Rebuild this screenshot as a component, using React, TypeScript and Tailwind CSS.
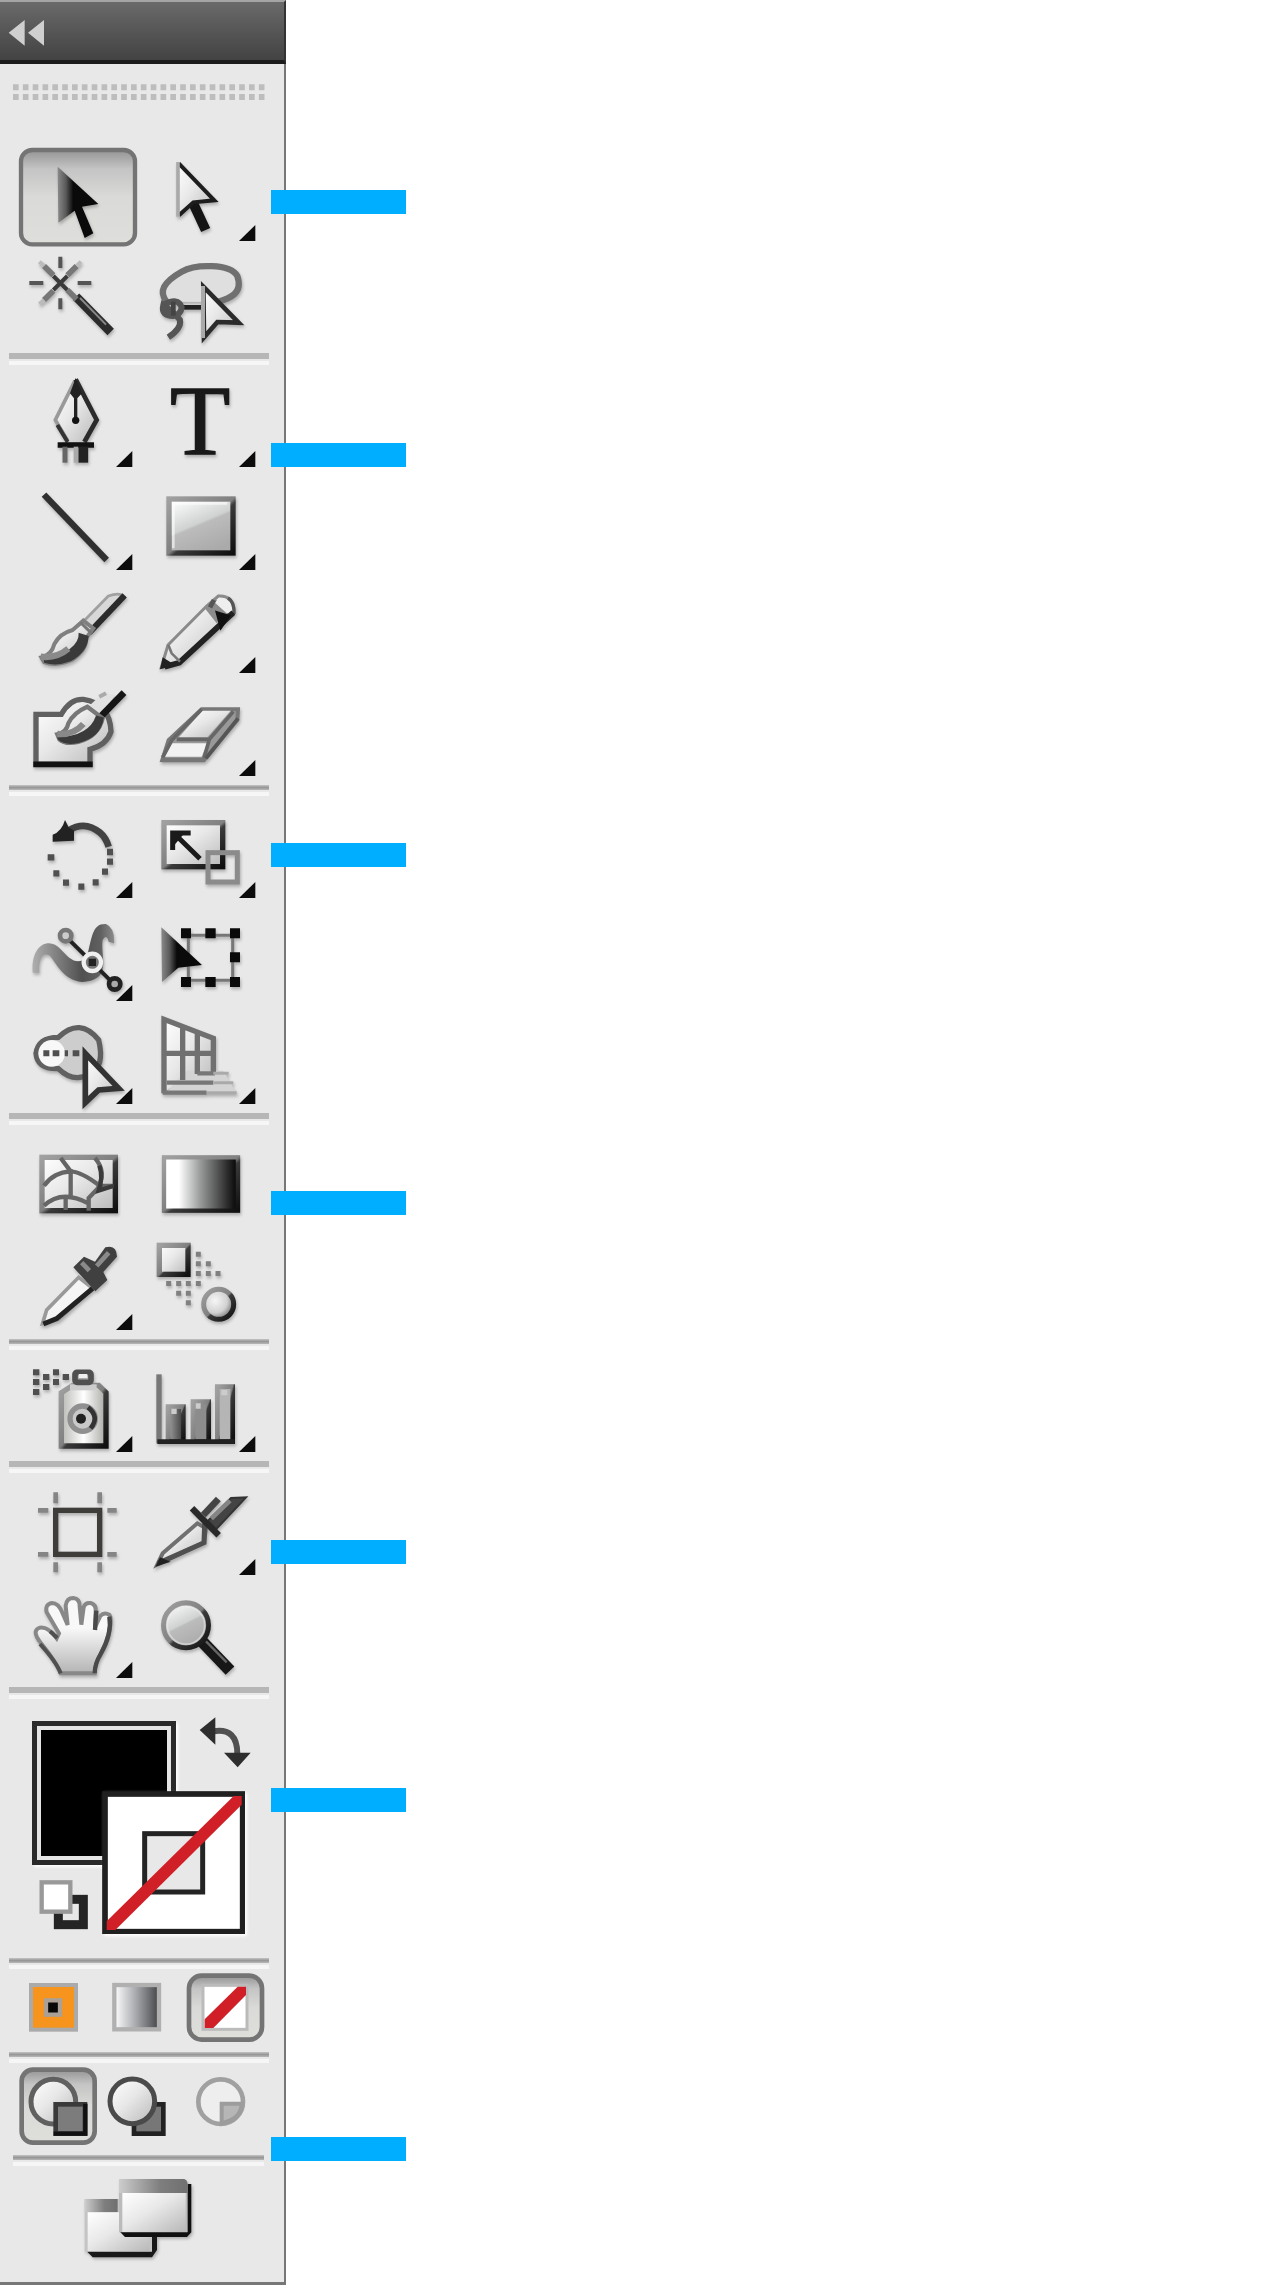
import type { ReactNode } from "react";

const DARK = "#2b2b2b";

function Gradients() {
  return (
    <svg className="absolute size-0" aria-hidden="true">
      <defs>
        <linearGradient id="pressed" x1="0" y1="0" x2="0" y2="1">
          <stop offset="0" stopColor="#949494" />
          <stop offset="0.2" stopColor="#c4c4c4" />
          <stop offset="0.5" stopColor="#dadad8" />
          <stop offset="1" stopColor="#dededb" />
        </linearGradient>
        <linearGradient id="arrow" x1="0" y1="0" x2="1" y2="0">
          <stop offset="0" stopColor="#8a8a8a" />
          <stop offset="0.2" stopColor="#5a5a5a" />
          <stop offset="0.38" stopColor="#0a0a0a" />
        </linearGradient>
        <linearGradient id="light" x1="0" y1="0" x2="1" y2="1">
          <stop offset="0" stopColor="#ffffff" />
          <stop offset="0.45" stopColor="#e8e8e8" />
          <stop offset="1" stopColor="#b8b8b8" />
        </linearGradient>
        <linearGradient id="glass" x1="0.1" y1="0" x2="0.6" y2="1">
          <stop offset="0" stopColor="#ffffff" />
          <stop offset="0.5" stopColor="#d0d2d2" />
          <stop offset="0.54" stopColor="#bcbcbc" />
          <stop offset="1" stopColor="#aaaaaa" />
        </linearGradient>
        <linearGradient id="edge" x1="0" y1="0" x2="1" y2="1">
          <stop offset="0" stopColor="#a0a0a0" />
          <stop offset="0.5" stopColor="#808080" />
          <stop offset="0.55" stopColor="#3a3a3a" />
          <stop offset="1" stopColor="#101010" />
        </linearGradient>
        <linearGradient id="ramp" x1="0" y1="0" x2="1" y2="0">
          <stop offset="0.2" stopColor="#ffffff" />
          <stop offset="0.5" stopColor="#969897" />
          <stop offset="0.95" stopColor="#101010" />
        </linearGradient>
        <linearGradient id="rampSoft" x1="0" y1="0" x2="1" y2="0">
          <stop offset="0" stopColor="#ffffff" />
          <stop offset="0.5" stopColor="#a4a6aa" />
          <stop offset="1" stopColor="#444448" />
        </linearGradient>
        <linearGradient id="titleBar" x1="0" y1="0" x2="1" y2="0">
          <stop offset="0" stopColor="#cdcdcd" />
          <stop offset="0.6" stopColor="#7e7e7e" />
          <stop offset="1" stopColor="#707070" />
        </linearGradient>
        <linearGradient id="metal" x1="0" y1="0" x2="1" y2="0">
          <stop offset="0" stopColor="#b8b8b4" />
          <stop offset="0.5" stopColor="#ffffff" />
          <stop offset="1" stopColor="#a8a8a4" />
        </linearGradient>
        <linearGradient id="barFill" x1="0" y1="0" x2="1" y2="0">
          <stop offset="0" stopColor="#a0a0a0" />
          <stop offset="1" stopColor="#3c3c3c" />
        </linearGradient>
        <linearGradient id="tube" gradientUnits="userSpaceOnUse" x1="95" y1="440" x2="370" y2="440">
          <stop offset="0" stopColor="#b0b0b0" />
          <stop offset="0.55" stopColor="#505050" />
          <stop offset="0.75" stopColor="#606060" />
          <stop offset="1" stopColor="#a8a8a8" />
        </linearGradient>
        <radialGradient id="ball" cx="0.38" cy="0.38" r="0.62">
          <stop offset="0" stopColor="#f6f6f6" />
          <stop offset="0.65" stopColor="#d2d2d2" />
          <stop offset="1" stopColor="#808080" />
        </radialGradient>
        <linearGradient id="skin" x1="0" y1="0" x2="0" y2="1">
          <stop offset="0.4" stopColor="#f8f8f8" />
          <stop offset="1" stopColor="#b4b4b4" />
        </linearGradient>
      </defs>
    </svg>
  );
}

/* Artwork is drawn on a grid of three units per pixel. */
function Tool({ label, x, y, more, pressed, children }: {
  label: string; x: number; y: number; more?: boolean; pressed?: boolean; children: ReactNode;
}) {
  return (
    <button type="button" aria-label={label} aria-pressed={!!pressed} className="block h-[103px]">
      <svg viewBox={`${x} ${y} 369 309`} className="size-full overflow-visible" fill="none">
        {pressed && (
          <rect x={x + 12} y={y + 12} width="342" height="283" rx="34" fill="url(#pressed)" stroke="#747474" strokeWidth="13" />
        )}
        <g className="drop-shadow-[3px_7px_5px_rgba(0,0,0,0.25)]">{children}</g>
        {more && <path d={`M${x + 297} ${y + 285}h49v-48z`} fill="#0c0c0c" />}
      </svg>
    </button>
  );
}

function Rule({ kind = "thin" }: { kind?: "thick" | "thin" | "short" | "inset" }) {
  const box = {
    thick: "h-5 ml-[9px] mr-[15px]",
    thin: "h-[19px] ml-[9px] mr-[15px]",
    short: "h-4 ml-[9px] mr-[15px]",
    inset: "h-4 ml-[13px] mr-5",
  }[kind];
  return (
    <div role="separator" className={`pt-px ${box}`}>
      <div className={kind === "thick" ? "h-1.5 bg-[#b6b6b6]" : "h-[5px] bg-linear-to-b from-[#c4c4c4] via-[#979797] to-[#b8b8b8]"} />
      <div className="mt-0.5 h-1 bg-[#f6f6f6]" />
    </div>
  );
}

function Group({ children, marker }: { children: ReactNode; marker?: ReactNode }) {
  return (
    <section className="relative">
      <div className="ml-[17px] grid w-[246px] grid-cols-2">{children}</div>
      {marker}
    </section>
  );
}

function Marker({ at }: { at: string }) {
  return <div className={`absolute left-[271px] h-6 w-[135px] bg-[#00aeff] ${at}`} />;
}

export default function App() {
  return (
    <main className="min-h-screen bg-white font-['Liberation_Sans',sans-serif]">
      <Gradients />
      <aside aria-label="Tools" className="w-[286px] border-r-2 border-b-[3px] border-[#777] bg-[#e8e8e8]">
        <header className="-mr-0.5 h-16 border-t-2 border-r-2 border-b-4 border-t-[#a5a5a5] border-r-[#333] border-b-[#1c1c1c] bg-linear-to-b from-[#6a6a6a] to-[#434343]">
          <button type="button" aria-label="Collapse panel" className="ml-2 block h-full w-10">
            <svg viewBox="24 6 120 174" className="size-full" fill="#cfcfcf">
              <path d="M26 98L74 60V137ZM84 98L132 60V137Z" />
            </svg>
          </button>
        </header>

        <div className="h-[82px] pt-[18px] pl-[13px]">
          <svg viewBox="39 246 762 60" className="h-5 w-[254px]" stroke="#bdbdbd" strokeWidth="18" strokeDasharray="17 12.5">
            <path d="M39 262H797M39 291H797" />
          </svg>
        </div>

        <Group marker={<Marker at="top-11" />}>
          <Tool label="Selection" x={51} y={438} pressed>
            <path d="M173 500L295 612L246 620L280 700L254 714L224 632L175 668Z" fill="url(#arrow)" />
          </Tool>
          <Tool label="Direct selection" x={420} y={438} more>
            <path d="M575 600L617 690" stroke="#151515" strokeWidth="30" />
            <path d="M534 490L642 600L580 605L534 648Z" fill="url(#light)" />
            <path d="M536 490L643 601L580 607L537 646" stroke="#1d1d1d" strokeWidth="12" />
            <path d="M534 650V486" stroke="#aaa" strokeWidth="11" />
          </Tool>
          <Tool label="Magic wand" x={51} y={747}>
            <path d="M228 890L332 996" stroke={DARK} strokeWidth="27" />
            <path d="M240 894L318 974" stroke="#888" strokeWidth="6" />
            <path d="M160 828L202 870M160 870L202 828" stroke="#3a3a3a" strokeWidth="12" />
            <path d="M181 770V804M181 895V928M88 849H130M233 849H274" stroke="#555" strokeWidth="12" />
            <path d="M132 798L160 826M230 798L202 826M132 900L160 872M202 870L230 898" stroke="#777" strokeWidth="17" />
            <path d="M118 785L132 798M243 785L230 798M118 912L132 900" stroke="#bbb" strokeWidth="12" />
          </Tool>
          <Tool label="Lasso" x={420} y={747}>
            <path d="M500 905C475 875 490 846 545 815C585 792 690 790 712 828C730 880 690 895 652 906" fill="#dfdfdf" stroke="#707070" strokeWidth="19" />
            <path d="M540 922H604" stroke="#222" strokeWidth="14" />
            <path d="M490 915Q535 890 545 922Q543 944 520 948Q482 948 490 915Q525 940 540 960Q545 985 505 1012" stroke="#555" strokeWidth="18" />
            <path d="M520 905V947" stroke="#444" strokeWidth="14" />
            <path d="M610 860L716 968L652 966L612 1012Z" fill="url(#light)" stroke={DARK} strokeWidth="14" />
            <path d="M609 858V1014" stroke="#aaa" strokeWidth="12" />
          </Tool>
        </Group>
        <Rule kind="thick" />

        <Group marker={<Marker at="top-[71px]" />}>
          <Tool label="Pen" x={51} y={66} more>
            <path d="M227 90L168 210L205 276H250L292 210Z" fill="url(#light)" />
            <path d="M225 92L166 210L203 272" stroke="#999" strokeWidth="11" />
            <path d="M172 225L203 276" stroke="#333" strokeWidth="12" />
            <path d="M227 88L290 210L253 276" stroke={DARK} strokeWidth="14" />
            <path d="M227 84L246 130L232 145V205H222V145L210 130Z" fill="#222" />
            <circle cx="227" cy="211" r="11" fill="#111" />
            <path d="M173 285H282" stroke="#111" strokeWidth="17" />
            <path d="M195 290V338" stroke="#666" strokeWidth="15" />
            <path d="M228 290V338" stroke="#aaa" strokeWidth="14" />
            <path d="M250 290V338" stroke="#222" strokeWidth="29" />
          </Tool>
          <Tool label="Type" x={420} y={66} more>
            <text x="510" y="311" fontSize="296" fill="#191919" stroke="#191919" strokeWidth="4" className="font-['Liberation_Serif',serif]">T</text>
          </Tool>
          <Tool label="Line segment" x={51} y={375} more>
            <path d="M132 434L320 630" stroke="#303030" strokeWidth="19" />
          </Tool>
          <Tool label="Rectangle" x={420} y={375} more>
            <rect x="507" y="447" width="192" height="162" fill="url(#glass)" stroke="url(#edge)" strokeWidth="16" />
            <path d="M520 595V460H682" stroke="#fff" strokeOpacity="0.6" strokeWidth="8" />
          </Tool>
          <Tool label="Paintbrush" x={51} y={24}>
            <path d="M240 165L325 78Q360 66 372 80L280 178Z" fill="#d8d8d8" stroke="#a0a0a0" strokeWidth="8" />
            <path d="M374 76L268 188" stroke={DARK} strokeWidth="18" />
            <path d="M124 262Q155 255 163 222Q180 190 218 180L250 152L280 175L258 205Q260 240 215 270Q170 290 132 276Z" fill="url(#light)" stroke="#808080" strokeWidth="12" />
            <path d="M132 266Q185 262 210 236Q238 215 236 188L266 198Q264 246 212 274Q170 290 132 278Z" fill="#3a3a3a" />
            <path d="M122 260Q170 266 205 236" stroke="#8a8a8a" strokeWidth="19" />
            <path d="M242 158L275 190" stroke="#777" strokeWidth="9" />
          </Tool>
          <Tool label="Pencil" x={420} y={24} more>
            <path d="M484 292L504 225L620 108L655 78Q700 75 702 125L540 278Z" fill="url(#light)" stroke="#8a8a8a" strokeWidth="9" />
            <path d="M612 112L650 160L688 132L648 88Z" fill="#8c8c8c" />
            <path d="M656 84Q694 82 698 124L680 130L645 98Z" fill="#eee" />
            <path d="M684 84Q704 96 702 132" stroke="#555" strokeWidth="10" />
            <path d="M700 128L538 278L494 290" stroke="#222" strokeWidth="17" />
            <path d="M682 140L655 132L664 166Z" fill="#111" stroke="#111" strokeWidth="14" />
            <path d="M630 112L642 90" stroke="#555" strokeWidth="14" />
            <path d="M505 225L515 250L540 275" stroke="#777" strokeWidth="8" />
            <path d="M480 298L488 262L526 286Z" fill="#222" />
          </Tool>
          <Tool label="Blob brush" x={51} y={333}>
            <path d="M108 433H184Q210 386 250 388Q330 400 333 485Q320 525 270 538V583H108Z" fill="url(#light)" stroke="#606060" strokeWidth="16" />
            <path d="M100 583H278" stroke="#111" strokeWidth="17" />
            <path d="M215 455L304 374L345 374L304 440Z" fill="#e2e2e2" />
            <path d="M372 368L296 446" stroke="#161616" strokeWidth="20" />
            <path d="M298 380L318 370" stroke="#aaa" strokeWidth="12" />
            <path d="M172 493Q200 487 205 460Q220 428 262 410L308 445Q295 500 235 516Q195 524 178 508Z" fill="url(#light)" stroke="#777" strokeWidth="13" />
            <path d="M176 505Q270 500 290 440L308 445Q300 500 235 516Q195 524 178 508Z" fill="#3a3a3a" stroke="#3a3a3a" strokeWidth="6" />
            <path d="M172 492Q220 496 250 462" stroke="#888" strokeWidth="19" />
          </Tool>
          <Tool label="Eraser" x={420} y={333} more>
            <path d="M605 418H714L712 450L612 570H487L506 510Z" fill="#999" stroke="#777" strokeWidth="12" />
            <path d="M607 422H692L622 502H537Z" fill="url(#light)" />
            <path d="M516 520H622L605 560H492Z" fill="#f2f2f2" />
            <path d="M605 418L516 510L488 562" stroke="#666" strokeWidth="11" />
            <path d="M700 425L628 508L612 565M530 508H628" stroke="#666" strokeWidth="11" />
            <path d="M484 570H614" stroke="#777" strokeWidth="14" />
            <path d="M714 445L618 565" stroke="#555" strokeWidth="11" />
          </Tool>
        </Group>
        <Rule />

        <Group marker={<Marker at="top-10" />}>
          <Tool label="Rotate" x={51} y={39} more>
            <path d="M205 122Q255 90 300 128Q317 142 326 170" stroke="#424242" strokeWidth="20" />
            <path d="M195 90L206 112L222 122V152L158 155V134Q185 125 195 90Z" fill="#222" />
            <path d="M321 186H339M321 215H339M306 245H324M278 277H296M235 290H253M189 278H207M160 250H178M143 202H163" stroke="#505050" strokeWidth="19" />
          </Tool>
          <Tool label="Scale" x={420} y={39} more>
            <rect x="492" y="98" width="176" height="132" fill="url(#light)" stroke="url(#edge)" strokeWidth="16" />
            <path d="M524 132L600 206M518 180V129H572" stroke="#1a1a1a" strokeWidth="15" />
            <path d="M513 177V125H557Z" fill="#1a1a1a" />
            <rect x="624" y="188" width="88" height="88" stroke="#8b8b8b" strokeWidth="15" />
          </Tool>
          <Tool label="Warp" x={51} y={348} more>
            <path d="M98 548C92 460 150 440 182 478C210 508 228 526 260 505C277 440 276 400 318 402Q345 414 342 460L326 455Q320 430 308 450C300 500 340 570 246 576C188 570 170 520 148 496C122 484 116 520 118 548Z" fill="url(#tube)" />
            <path d="M200 442L340 580" stroke="#222" strokeWidth="12" />
            <circle cx="197" cy="437" r="17" fill="#ccc" stroke="#777" strokeWidth="14" />
            <circle cx="277" cy="517" r="26" fill="#777" stroke="#f0f0f0" strokeWidth="13" />
            <path d="M266 517H288" stroke="#222" strokeWidth="22" />
            <circle cx="344" cy="582" r="17" fill="#aaa" stroke="#222" strokeWidth="14" />
          </Tool>
          <Tool label="Free transform" x={420} y={348}>
            <path d="M560 436H698V571H565V436" stroke="#777" strokeWidth="9" />
            <path d="M484 412L606 525L535 533L486 576Z" fill="url(#arrow)" />
            <path d="M543 430H573M616 430H647M690 430H720M690 502H720M543 576H573M616 576H647M690 576H720" stroke="#0a0a0a" strokeWidth="30" />
          </Tool>
          <Tool label="Shape builder" x={51} y={657} more>
            <path d="M175 742Q240 680 296 750Q315 830 270 852Q220 880 175 836Q112 838 108 790Q115 742 175 742Z" fill="#cdcdcd" stroke="#606060" strokeWidth="16" />
            <circle cx="155" cy="790" r="40" fill="#f8f8f8" />
            <path d="M130 790H148M158 790H178M194 790H204M218 790H238" stroke="#505050" strokeWidth="18" />
            <path d="M256 790L356 895L296 900L256 938Z" fill="url(#light)" stroke="#333" strokeWidth="17" />
          </Tool>
          <Tool label="Perspective grid" x={420} y={657} more>
            <path d="M492 688L640 743V850H590L548 872L492 905Z" fill="url(#light)" />
            <path d="M500 905L560 842H670L710 910Z" fill="#d4d4d4" />
            <path d="M492 910V688L640 745V848M548 708V870M592 730V852M492 790H640" stroke="#707070" strokeWidth="16" />
            <path d="M592 850H645M500 878H640M488 908H620" stroke="#777" strokeWidth="13" />
            <path d="M640 850H686M640 878H700M620 908H710" stroke="#aaa" strokeWidth="9" />
          </Tool>
        </Group>
        <Rule kind="thick" />

        <Group marker={<Marker at="top-[59px]" />}>
          <Tool label="Mesh" x={51} y={66}>
            <rect x="126" y="142" width="220" height="160" fill="url(#light)" stroke="url(#edge)" strokeWidth="16" />
            <path d="M182 144L212 184Q246 186 300 228H340M132 227Q160 187 212 184V257M132 287Q185 237 265 280M285 144Q322 187 292 237L266 264V302M197 262V300" stroke="#666" strokeWidth="13" />
            <path d="M298 167Q310 202 296 242L340 228" stroke="#3a3a3a" strokeWidth="13" />
          </Tool>
          <Tool label="Gradient" x={420} y={66}>
            <rect x="492" y="142" width="222" height="160" fill="url(#ramp)" stroke="url(#edge)" strokeWidth="13" />
          </Tool>
          <Tool label="Eyedropper" x={51} y={375} more>
            <path d="M128 640L140 600L236 502L278 535L175 628Z" fill="#f5f5f5" stroke="#999" strokeWidth="11" />
            <path d="M278 535L170 626L130 642" stroke="#222" strokeWidth="15" />
            <path d="M220 472L252 440L285 455L316 412Q350 402 351 440L310 486L322 510L286 544Z" fill="#404040" />
            <path d="M245 458L268 482M290 468L326 428" stroke="#8a8a8a" strokeWidth="14" />
          </Tool>
          <Tool label="Blend" x={420} y={375}>
            <rect x="478" y="406" width="86" height="87" fill="url(#light)" stroke="url(#edge)" strokeWidth="16" />
            <path d="M595 425V500M625 454V500M654 483V500M506 513V528M536 513V558M565 513V590M595 513V528" stroke="#808080" strokeWidth="15" strokeDasharray="15 14" />
            <circle cx="656" cy="583" r="45" fill="url(#ball)" stroke="url(#edge)" strokeWidth="15" />
          </Tool>
        </Group>
        <Rule />

        <Group>
          <Tool label="Symbol sprayer" x={51} y={741} more>
            <path d="M99 787H118M99 816H118M99 846H118M129 801H148M129 831H148M159 787H177M159 816H177M188 801H207" stroke="#505050" strokeWidth="18" />
            <path d="M184 848L218 826H296L318 848V1008H184Z" fill="url(#metal)" stroke="url(#edge)" strokeWidth="16" />
            <path d="M210 832H290" stroke="#ccc" strokeWidth="18" />
            <rect x="225" y="787" width="48" height="30" rx="6" fill="#aaa" stroke="#505050" strokeWidth="17" />
            <path d="M236 798H262" stroke="#eee" strokeWidth="12" />
            <circle cx="248" cy="926" r="38" fill="#c9c9c9" stroke="#909090" strokeWidth="16" />
            <path d="M264 892Q300 920 272 955" stroke="#333" strokeWidth="14" />
            <circle cx="243" cy="926" r="15" fill="#222" />
          </Tool>
          <Tool label="Column graph" x={420} y={741} more>
            <path d="M504 890H550V995H504Z" fill="url(#barFill)" stroke="url(#edge)" strokeWidth="14" />
            <path d="M579 875H626V995H579Z" fill="#8c8c8c" stroke="url(#edge)" strokeWidth="14" />
            <path d="M652 830H698V995H652Z" fill="#b5b5b5" stroke="url(#edge)" strokeWidth="14" />
            <path d="M514 904H530M587 888H602M664 848H682" stroke="#ccc" strokeWidth="16" />
            <path d="M477 793V1000" stroke="#777" strokeWidth="16" />
            <path d="M472 995H704" stroke="#222" strokeWidth="14" />
          </Tool>
        </Group>
        <Rule kind="thick" />

        <Group marker={<Marker at="top-[60px]" />}>
          <Tool label="Artboard" x={51} y={60}>
            <rect x="167" y="151" width="132" height="132" stroke="#3e3d3a" strokeWidth="16" />
            <path d="M167 97V130M299 97V130M167 307V337M299 307V337M114 151H145M322 151H350M114 283H145M322 283H350" stroke="#858585" strokeWidth="14" />
          </Tool>
          <Tool label="Slice" x={420} y={60} more>
            <path d="M472 314L488 280L592 190L618 205L612 248Z" fill="url(#light)" stroke="#707070" strokeWidth="12" />
            <path d="M474 310L612 248L614 190" stroke="#505050" strokeWidth="15" />
            <path d="M466 320L480 292L512 305Z" fill="#222" />
            <path d="M610 165L655 117" stroke="#444" strokeWidth="20" />
            <path d="M624 182L693 114L738 112L648 208Z" fill="#444" stroke="#333" strokeWidth="6" />
            <path d="M634 176L690 122" stroke="#858585" strokeWidth="14" />
            <path d="M576 145L656 226" stroke="#292929" strokeWidth="19" />
          </Tool>
          <Tool label="Hand" x={51} y={369} more>
            <path d="M182 640Q170 607 122 548Q93 512 120 503Q145 500 170 535L177 520L140 457Q134 433 156 429Q175 429 187 458L203 495L197 437Q200 414 220 414Q240 416 239 440L244 494L251 442Q255 427 272 429Q289 434 287 454L285 502L301 468Q312 455 328 464Q334 472 331 497Q323 542 302 582Q284 612 284 640Z" fill="url(#skin)" stroke="#888" strokeWidth="12" />
            <path d="M328 470Q337 522 302 582Q284 612 284 640M289 452L285 510" stroke="#4a4a4a" strokeWidth="13" />
            <path d="M120 552Q170 607 182 640M150 514L172 534" stroke="#505050" strokeWidth="12" />
          </Tool>
          <Tool label="Zoom" x={420} y={369}>
            <path d="M606 544L690 632" stroke="#171717" strokeWidth="36" />
            <path d="M618 544L680 607" stroke="#666" strokeWidth="7" />
            <circle cx="558" cy="496" r="67" fill="url(#glass)" stroke="url(#edge)" strokeWidth="16" />
            <circle cx="558" cy="496" r="57" stroke="#eee" strokeOpacity="0.5" strokeWidth="7" />
          </Tool>
        </Group>
        <Rule kind="thick" />

        {/* Fill and stroke swatches overlap each other */}
        <section className="relative h-[251px]">
          <button type="button" aria-label="Fill" className="absolute top-[15px] left-8 size-36 border-[5px] border-[#2a2a2a] bg-black shadow-[2px_2px_3px_#fff]">
            <span className="block size-full border-4 border-[#e4e4e4]" />
          </button>
          <button type="button" aria-label="Swap fill and stroke" className="absolute top-[9px] left-[198px] h-14 w-[54px]">
            <svg viewBox="594 75 162 168" className="size-full" fill="none">
              <path d="M640 124Q712 112 712 192" stroke="#505050" strokeWidth="18" />
              <path d="M599 120L646 82V164ZM672 188H752L713 232Z" fill="#2e2e2e" />
            </svg>
          </button>
          <button type="button" aria-label="Stroke" className="absolute top-[85px] left-[102px] size-[143px] shadow-[2px_2px_3px_#fff]">
            <svg viewBox="305 302 429 429" className="size-full" fill="none">
              <rect x="314" y="311" width="413" height="413" fill="#fff" stroke="#202020" strokeWidth="17" />
              <rect x="433" y="430" width="174" height="175" fill="#e8e8e8" stroke="#242424" strokeWidth="15" />
              <path d="M319 693V719H345L724 343V317H700Z" fill="#d01f27" />
            </svg>
          </button>
          <button type="button" aria-label="Default fill and stroke" className="absolute top-[173px] left-[38px] size-[52px]">
            <svg viewBox="114 567 156 156" className="size-full" fill="none">
              <rect x="175" y="628" width="75" height="76" stroke="#242424" strokeWidth="27" />
              <rect x="125" y="577" width="86" height="88" fill="#fff" stroke="#999" strokeWidth="13" />
            </svg>
          </button>
          <Marker at="top-[82px]" />
        </section>
        <Rule kind="short" />

        <section className="flex h-[78px] items-start pl-[19px]">
          <button type="button" aria-label="Color" className="h-[70px] w-[79px]">
            <svg viewBox="57 69 237 210" className="size-full" fill="none">
              <rect x="93" y="105" width="135" height="134" fill="#f7941d" stroke="#aaa" strokeWidth="12" />
              <rect x="138" y="151" width="42" height="43" fill="#080808" stroke="#aaa095" strokeWidth="13" />
            </svg>
          </button>
          <button type="button" aria-label="Gradient fill" className="h-[70px] w-[88px]">
            <svg viewBox="294 69 264 210" className="size-full" fill="none">
              <rect x="343" y="105" width="134" height="133" fill="url(#rampSoft)" stroke="#b0b0b0" strokeWidth="13" />
            </svg>
          </button>
          <button type="button" aria-label="None" aria-pressed className="h-[70px] w-[79px]">
            <svg viewBox="558 69 237 210" className="size-full" fill="none">
              <rect x="567" y="77" width="219" height="192" rx="38" fill="url(#pressed)" stroke="#747474" strokeWidth="14" />
              <rect x="609" y="106" width="132" height="132" fill="#fff" stroke="#bbb" strokeWidth="9" />
              <path d="M614 234V208L713 110H738V135L640 234Z" fill="#d01f27" />
            </svg>
          </button>
        </section>
        <Rule kind="short" />

        <section className="relative flex h-[87px] items-start pl-[19px]">
          <button type="button" aria-label="Draw normal" aria-pressed className="h-[79px] w-[79px]">
            <svg viewBox="57 348 237 237" className="size-full" fill="none">
              <rect x="65" y="356" width="219" height="219" rx="34" fill="url(#pressed)" stroke="#747474" strokeWidth="14" />
              <circle cx="160" cy="452" r="67" fill="url(#light)" stroke="#606060" strokeWidth="15" />
              <rect x="167" y="460" width="88" height="88" fill="#7c7c7c" stroke="#3a3a3a" strokeWidth="14" />
              <path d="M161 548H256V458" stroke="#111" strokeWidth="13" />
            </svg>
          </button>
          <button type="button" aria-label="Draw behind" className="h-[79px] w-[88px]">
            <svg viewBox="294 348 264 237" className="size-full" fill="none">
              <rect x="402" y="460" width="88" height="88" fill="#777" stroke="#222" strokeWidth="14" />
              <circle cx="397" cy="451" r="67" fill="url(#light)" stroke="#4a4a4a" strokeWidth="15" />
            </svg>
          </button>
          <button type="button" aria-label="Draw inside" className="h-[79px] w-[79px]">
            <svg viewBox="558 348 237 237" className="size-full" fill="none">
              <circle cx="662" cy="452" r="67" fill="#eeeeee" stroke="#a0a0a0" strokeWidth="14" />
              <path d="M665 516V458H725Q724 505 665 516Z" fill="#b6b6b6" stroke="#9c9c9c" strokeWidth="12" />
            </svg>
          </button>
          <Marker at="top-[70px]" />
        </section>
        <Rule kind="inset" />

        <section className="flex h-28 pt-1 pl-[79px]">
          <button type="button" aria-label="Change screen mode" className="h-[90px] w-[120px]">
            <svg viewBox="236 675 360 270" className="size-full" fill="none">
              <g className="drop-shadow-[4px_6px_5px_rgba(0,0,0,0.25)]">
                <path d="M265 765H470V903L455 925H277L262 910Z" fill="#181818" />
                <path d="M253 750H455V908H253Z" fill="#c4c4c4" />
                <path d="M253 750H352V790H253Z" fill="url(#titleBar)" />
                <path d="M262 790H448V907H262Z" fill="url(#light)" />
                <path d="M370 705H573V850L560 864H374L360 850Z" fill="#101010" />
                <path d="M356 692H552Q564 694 562 710V850H356Z" fill="#bbb" />
                <path d="M356 690H552Q566 694 562 732H356Z" fill="url(#titleBar)" />
                <path d="M366 732H556V849H366Z" fill="url(#light)" />
              </g>
            </svg>
          </button>
        </section>
      </aside>
    </main>
  );
}
